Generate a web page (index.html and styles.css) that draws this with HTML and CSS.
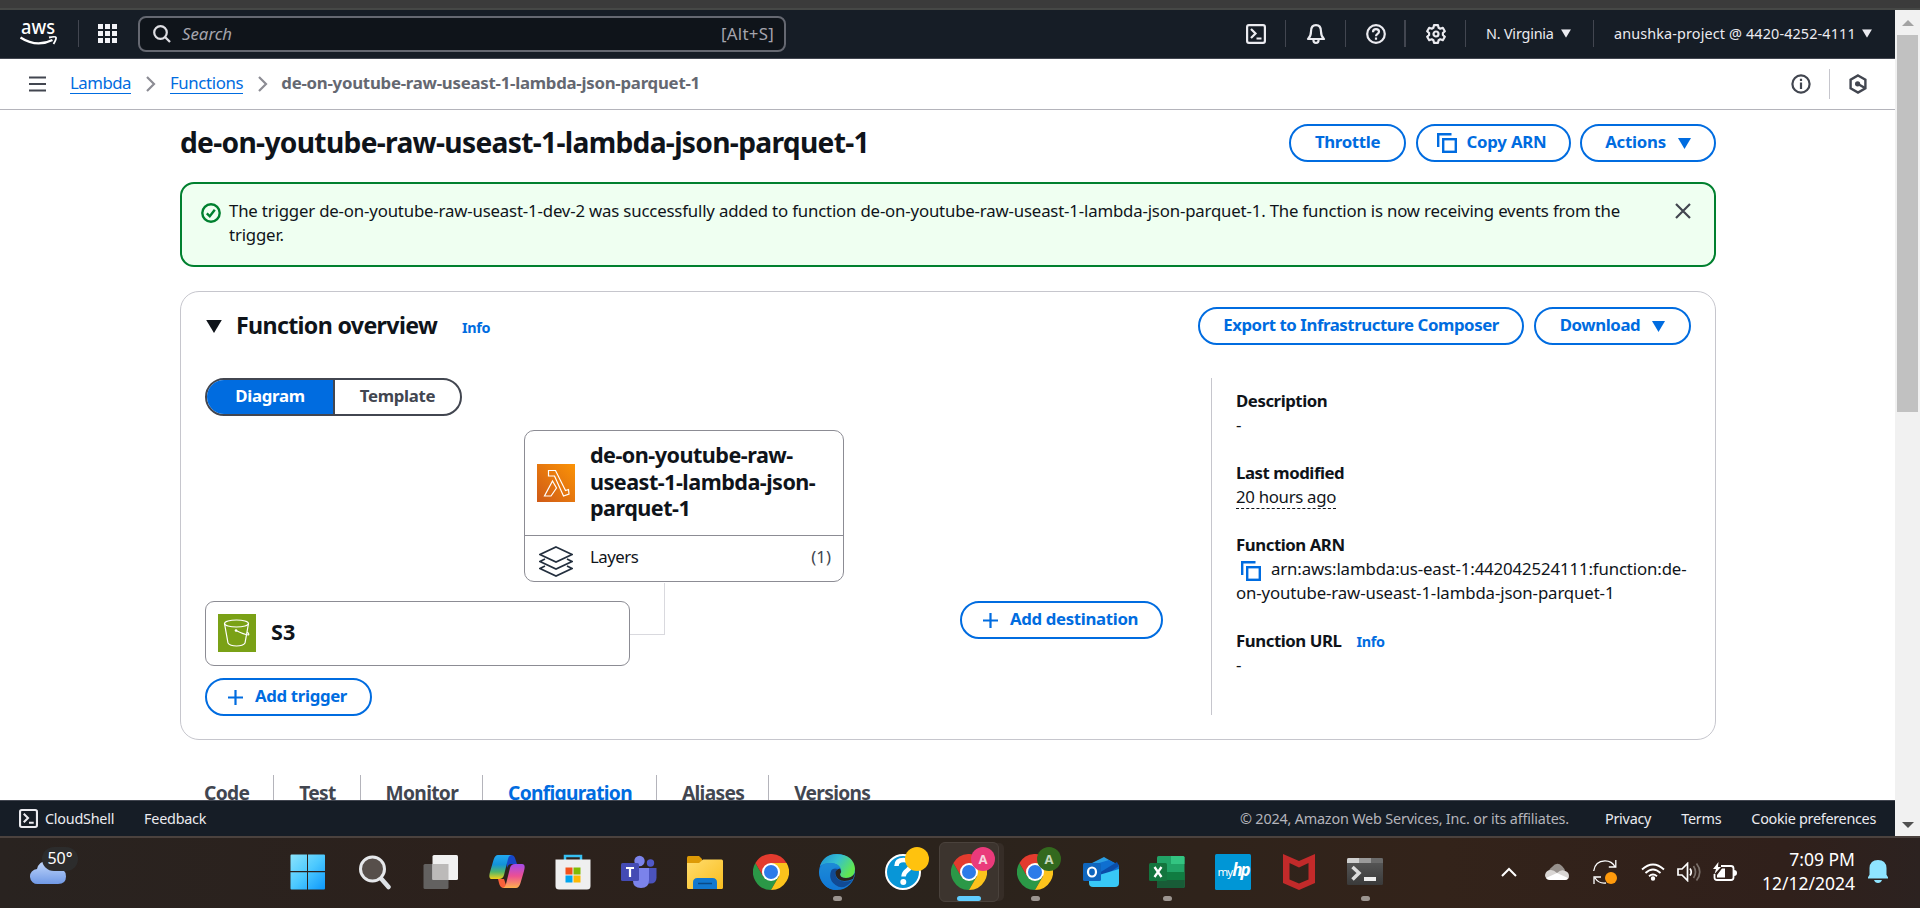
FILE: index.html
```
<!DOCTYPE html>
<html lang="en">
<head>
<meta charset="utf-8">
<title>de-on-youtube-raw-useast-1-lambda-json-parquet-1 | Functions | Lambda</title>
<link rel="stylesheet" href="styles.css">
</head>
<body>
<svg class="defs" width="0" height="0">
  <defs>
    <linearGradient id="gWin" x1="0" y1="0" x2="1" y2="1"><stop offset="0" stop-color="#8be3fb"/><stop offset=".5" stop-color="#4cc9ff"/><stop offset="1" stop-color="#0d98fb"/></linearGradient>
    <linearGradient id="gLam" x1="0" y1="1" x2="1" y2="0"><stop offset="0" stop-color="#cf5a17"/><stop offset="1" stop-color="#fb9306"/></linearGradient>
    <linearGradient id="gCloud" x1="0" y1="0" x2="0" y2="1"><stop offset="0" stop-color="#c3d8fb"/><stop offset="1" stop-color="#7099e6"/></linearGradient>
    <linearGradient id="gCopA" x1="0" y1="0" x2="0" y2="1"><stop offset="0" stop-color="#22a8f0"/><stop offset=".4" stop-color="#1392d8"/><stop offset=".7" stop-color="#4fb56c"/><stop offset="1" stop-color="#f4d018"/></linearGradient>
    <linearGradient id="gCopB" x1="0" y1="0" x2="0" y2="1"><stop offset="0" stop-color="#a34bea"/><stop offset=".5" stop-color="#ec4f93"/><stop offset="1" stop-color="#fdb04d"/></linearGradient>
    <linearGradient id="gFold" x1="0" y1="0" x2="1" y2="1"><stop offset="0" stop-color="#ffdd6e"/><stop offset="1" stop-color="#f9bd1e"/></linearGradient>
    <linearGradient id="gEdge" x1="0" y1="0" x2="1" y2=".5"><stop offset="0" stop-color="#1c8fd6"/><stop offset=".5" stop-color="#35bfd0"/><stop offset="1" stop-color="#62e84e"/></linearGradient>
    <linearGradient id="gEdge2" x1="0" y1="0" x2="0" y2="1"><stop offset="0" stop-color="#1d8bd6"/><stop offset="1" stop-color="#1077d6"/></linearGradient>
    <linearGradient id="gTerm" x1="0" y1="0" x2="0" y2="1"><stop offset="0" stop-color="#5a5a5a"/><stop offset="1" stop-color="#3a3a3a"/></linearGradient>
    <symbol id="copy" viewBox="0 0 20 20"><path d="M1.200 14V1.200H14.500" fill="none" stroke="currentColor" stroke-width="2.400"/><rect x="6.200" y="6.200" width="12.600" height="12.600" fill="none" stroke="currentColor" stroke-width="2.400"/></symbol>
    <symbol id="caret" viewBox="0 0 12 10"><path d="M0 0h12L6 10z" fill="currentColor"/></symbol>
    <symbol id="plus" viewBox="0 0 15 15"><path d="M7.500 0v15M0 7.500h15" stroke="currentColor" stroke-width="2.200"/></symbol>
    <symbol id="shell" viewBox="0 0 20 20"><rect x="1.100" y="1.100" width="17.800" height="17.800" rx="1.800" fill="none" stroke="currentColor" stroke-width="2.200"/><path d="M5 5l4.500 4.500L5 14M10.500 14.500h5" fill="none" stroke="currentColor" stroke-width="2.200"/></symbol>
    <symbol id="chev" viewBox="0 0 10 16"><path d="M1 1l7 7-7 7" fill="none" stroke="#8c8c94" stroke-width="2.200"/></symbol>
    <symbol id="chrome" viewBox="0 0 36 36">
      <path d="M2.400 9L10.200 22.500L18 27L25.800 22.500L18 36A18 18 0 0 1 2.400 9z" fill="#2b9847"/>
      <path d="M25.800 22.500L18 36A18 18 0 0 0 33.600 9H18z" fill="#fcc31c"/>
      <path d="M2.400 9A18 18 0 0 1 33.600 9H18L10.200 22.500z" fill="#e33b2e"/>
      <circle cx="18" cy="18" r="9" fill="#fff"/><circle cx="18" cy="18" r="7" fill="#2d7be9"/>
    </symbol>
  </defs>
</svg>

<div class="chrome-edge"></div>
<div class="viewport">
  <div class="console">
    <header class="topnav">
      <svg class="aws" viewBox="0 0 38 26"><text x="1" y="13" textLength="34" lengthAdjust="spacingAndGlyphs" class="aws-word">aws</text><path d="M.500 16.500q16 10.500 32 2.500" fill="none" stroke="#fff" stroke-width="2.300"/><path d="M29 16.500q6.500-1.500 7 0t-2.500 6.500" fill="none" stroke="#fff" stroke-width="1.800"/></svg>
      <i class="vr vr-logo"></i>
      <svg class="apps" viewBox="0 0 19 19" fill="#f3f3f7"><path d="M0 0h5v5H0zM7 0h5v5H7zM14 0h5v5h-5zM0 7h5v5H0zM7 7h5v5H7zM14 7h5v5h-5zM0 14h5v5H0zM7 14h5v5H7zM14 14h5v5h-5z"/></svg>
      <div class="search">
        <svg class="mag" viewBox="0 0 18 18"><circle cx="7.500" cy="7.500" r="6.300" fill="none" stroke="#dedee3" stroke-width="2.200"/><path d="M12 12l5 5" stroke="#dedee3" stroke-width="2.300"/></svg>
        <span class="ph">Search</span><span class="keys">[Alt+S]</span>
      </div>
      <div class="tools">
        <svg class="ti" viewBox="0 0 20 20"><use href="#shell"/></svg>
        <i class="vr"></i>
        <svg class="ti" viewBox="0 0 20 20" fill="none" stroke="currentColor" stroke-width="2.200"><path d="M2 15c2.300-2 3-4 3-7.500C5 3.500 7 1.200 10 1.200s5 2.300 5 6.300c0 3.500.7 5.500 3 7.500zM7.500 15.500v1q0 2.300 2.500 2.300t2.500-2.300v-1" stroke-linejoin="round"/></svg>
        <i class="vr"></i>
        <svg class="ti" viewBox="0 0 20 20" fill="none" stroke="currentColor" stroke-width="2.200"><circle cx="10" cy="10" r="8.800"/><path d="M7 8.200C7 6.300 8.200 5.200 10 5.200s3 1 3 2.600c0 2.200-3 2-3 4.400M10 13.600v2.200"/></svg>
        <i class="vr vr-thick"></i>
        <svg class="ti" viewBox="0 0 20 20" fill="none" stroke="currentColor" stroke-width="2.200"><path d="M8 1.200h4l.6 2.500 1.700 1 2.500-.9 2 3.400-1.900 1.800v2l1.900 1.800-2 3.400-2.500-.9-1.700 1-.6 2.500H8l-.6-2.500-1.700-1-2.500.9-2-3.400L3.100 11V9L1.200 7.200l2-3.400 2.500.9 1.700-1z" stroke-linejoin="round"/><circle cx="10" cy="10" r="2.500"/></svg>
        <i class="vr"></i>
        <span class="region t13">N. Virginia</span><svg class="nc" viewBox="0 0 12 10"><use href="#caret"/></svg>
        <i class="vr vr-acct"></i>
        <span class="acct t13">anushka-project @ 4420-4252-4111</span><svg class="nc" viewBox="0 0 12 10"><use href="#caret"/></svg>
      </div>
    </header>

    <nav class="crumbs">
      <svg class="burger" viewBox="0 0 17 16"><path d="M0 1.500h17M0 8h17M0 14.500h17" stroke="#424650" stroke-width="2"/></svg>
      <a class="lk l1">Lambda</a><svg class="cv"><use href="#chev"/></svg>
      <a class="lk l2">Functions</a><svg class="cv"><use href="#chev"/></svg>
      <span class="here">de-on-youtube-raw-useast-1-lambda-json-parquet-1</span>
      <svg class="ci info-i" viewBox="0 0 20 20" fill="none" stroke="#424650" stroke-width="2.200"><circle cx="10" cy="10" r="8.600"/><path d="M10 4.800v2.200M10 8.500v6.500"/></svg>
      <i class="cdiv"></i>
      <svg class="ci" viewBox="0 0 20 20" fill="none" stroke="#424650" stroke-width="2.400"><path d="M10 1.500l7.400 4.200v8.600L10 18.500l-7.400-4.200V5.700z"/><circle cx="9.600" cy="9.800" r="2.600" fill="#424650" stroke="none"/><path d="M10 10l7 4"/></svg>
    </nav>

    <main class="page">
      <div class="head">
        <h1>de-on-youtube-raw-useast-1-lambda-json-parquet-1</h1>
        <button class="btn b-throttle">Throttle</button>
        <button class="btn b-copy"><svg class="cp"><use href="#copy"/></svg>Copy ARN</button>
        <button class="btn b-actions">Actions<svg class="ca"><use href="#caret"/></svg></button>
      </div>

      <section class="flash">
        <svg class="ok" viewBox="0 0 20 20" fill="none" stroke="#00802f" stroke-width="2.400"><circle cx="10" cy="10" r="8.700"/><path d="M5.800 10.300l3 3 5-6.500"/></svg>
        <p>The trigger de-on-youtube-raw-useast-1-dev-2 was successfully added to function de-on-youtube-raw-useast-1-lambda-json-parquet-1. The function is now receiving events from the<br>trigger.</p>
        <svg class="x" viewBox="0 0 16 16"><path d="M1 1l14 14M15 1L1 15" stroke="#424650" stroke-width="2.200"/></svg>
      </section>

      <section class="overview">
        <div class="ov-head">
          <svg class="fold"><use href="#caret"/></svg>
          <h2>Function overview</h2><a class="info">Info</a>
          <button class="btn b-export">Export to Infrastructure Composer</button>
          <button class="btn b-down">Download<svg class="ca"><use href="#caret"/></svg></button>
        </div>
        <div class="ov-body">
          <div class="diagram">
            <div class="seg"><span class="on">Diagram</span><span class="off">Template</span></div>
            <div class="fn">
              <div class="fn-top">
                <svg class="svc" viewBox="0 0 38 38"><rect width="38" height="38" fill="url(#gLam)"/><path d="M11.500 6.500h7l10 20 3-1 .5 4.500-5.500 2L17.500 12h-6zM15.500 17l4 7-5.500 8H7.500z" fill="none" stroke="#fff" stroke-width="1.200"/></svg>
                <span class="fn-name">de-on-youtube-raw-<br>useast-1-lambda-json-<br>parquet-1</span>
              </div>
              <div class="fn-layers">
                <svg class="lay" viewBox="0 0 34 31" fill="none" stroke="#232f3e" stroke-width="1.600"><path d="M17 1l16 7.500L17 16 1 8.500zM6 13l-5 2.500L17 23l16-7.500-5-2.500M6 20l-5 2.500L17 30l16-7.500-5-2.500"/></svg>
                <span class="lt">Layers</span><span class="ln">(1)</span>
              </div>
            </div>
            <div class="row">
              <div class="s3">
                <svg class="svc" viewBox="0 0 38 38"><rect width="38" height="38" fill="#7aa116"/><g fill="none" stroke="#fff" stroke-width="1.200"><ellipse cx="18.500" cy="9.500" rx="12" ry="3.500"/><path d="M6.500 9.500L10 29q2 3 8.500 3t8.500-3l3.500-19.500"/><path d="M18 16.500q8 4 12.500 4.500 1-.5-1.200-3"/></g><circle cx="18" cy="16.500" r="1.300" fill="#fff"/></svg>
                <span>S3</span>
              </div>
              <div class="wire"></div>
              <button class="btn b-dest"><svg class="pl"><use href="#plus"/></svg>Add destination</button>
            </div>
            <button class="btn b-trig"><svg class="pl"><use href="#plus"/></svg>Add trigger</button>
          </div>
          <dl class="details">
            <dt>Description</dt><dd>-</dd>
            <dt>Last modified</dt><dd><span class="ago">20 hours ago</span></dd>
            <dt>Function ARN</dt><dd class="arn"><svg class="cp"><use href="#copy"/></svg>arn:aws:lambda:us-east-1:442042524111:function:de-<br>on-youtube-raw-useast-1-lambda-json-parquet-1</dd>
            <dt>Function URL<a class="info">Info</a></dt><dd>-</dd>
          </dl>
        </div>
      </section>

      <nav class="tabs"><span>Code</span><span>Test</span><span>Monitor</span><span class="cur">Configuration</span><span>Aliases</span><span>Versions</span></nav>
    </main>

    <footer class="foot">
      <svg class="fs" viewBox="0 0 20 20"><use href="#shell"/></svg>
      <span class="f1">CloudShell</span><span class="f2">Feedback</span>
      <span class="f3">© 2024, Amazon Web Services, Inc. or its affiliates.</span>
      <span class="f4">Privacy</span><span class="f5">Terms</span><span class="f6">Cookie preferences</span>
    </footer>
  </div>
  <div class="scroll">
    <svg class="sa up" viewBox="0 0 12 6"><path d="M0 6h12L6 0z" fill="#a3a3a3"/></svg>
    <i class="thumb"></i>
    <svg class="sa dn" viewBox="0 0 12 6"><path d="M0 0h12L6 6z" fill="#505050"/></svg>
  </div>
</div>

<div class="taskbar">
  <div class="weather"><svg viewBox="0 0 36 24"><path d="M8 23a7.500 7.500 0 0 1-1-15Q9 0 17 0q7 0 9 7 10 0 10 8.500Q36 23 28 23z" fill="url(#gCloud)"/></svg><span>50°</span></div>
  <div class="apps-row">
    <div class="app"><svg viewBox="0 0 36 36"><path d="M.5 1.500q0-1 1-1H17V17H.500zM18 .5h16q1 0 1 1V17H18zM.500 18.200H17V35.500H1.500q-1 0-1-1zM18 18.200h17v16.300q0 1-1 1H18z" fill="url(#gWin)"/></svg></div>
    <div class="app"><svg viewBox="0 0 36 36"><path d="M24.500 25l7 8" stroke="#dde1e6" stroke-width="4.500" stroke-linecap="round"/><circle cx="15.500" cy="15" r="12" fill="#574f4b" stroke="#e6e8eb" stroke-width="3"/></svg></div>
    <div class="app"><svg viewBox="0 0 36 36"><rect x=".5" y="10" width="25" height="25" rx="1.500" fill="#636160"/><rect x="9.500" y="1" width="25.500" height="25" rx="1.500" fill="#f1f1f1"/><rect x="9.500" y="10" width="16" height="16" fill="#bcbab9"/></svg></div>
    <div class="app"><svg viewBox="0 0 36 36"><path d="M17 1h5q3 0 4 3l2 6h-6q-3 0-4 4z" fill="#1647c8"/><path d="M9 25h6l3 9h-3q-4 0-5-5z" fill="#f8603a"/><path d="M9 1h14q-3 0-4 4l-4 16q-1 4-5 4H3q-4 0-2-7L4.500 6Q6 1 9 1z" fill="url(#gCopA)"/><path d="M27 34H13q3 0 4-4l4-16q1-4 5-4h7q4 0 2 7l-3.500 12Q30 34 27 34z" fill="url(#gCopB)"/></svg></div>
    <div class="app"><svg viewBox="0 0 36 36"><path d="M10 8V2h16v6" fill="none" stroke="#36c0f2" stroke-width="2.500"/><path d="M.5 5.500h35V32q0 3.500-3.500 3.500H4Q.5 35.500.5 32z" fill="#efefef"/><path d="M10.500 13.500h7v7h-7z" fill="#f2511b"/><path d="M18.500 13.500h7v7h-7z" fill="#80bb03"/><path d="M10.500 21.500h7v7h-7z" fill="#00a5ee"/><path d="M18.500 21.500h7v7h-7z" fill="#fdb902"/></svg></div>
    <div class="app"><svg viewBox="0 0 36 36"><circle cx="18.500" cy="7" r="5.200" fill="#7b83eb"/><circle cx="29.500" cy="9" r="3.700" fill="#5059c9"/><path d="M25 14h10.500v9.500q0 6-6 6H25z" fill="#4b53bc"/><path d="M12 14h16v12q0 8-8 8t-8-7z" fill="#7b83eb"/><rect y="9" width="18" height="18" rx="1.500" fill="#444bb4"/><path d="M5 14h8M9 14v9" stroke="#fff" stroke-width="2.200"/></svg></div>
    <div class="app"><svg viewBox="0 0 36 36"><path d="M0 3.500Q0 2 1.500 2H12l3 3v6H0z" fill="#dd9a06"/><path d="M0 9h12l4-3.500h18.500Q36 5.500 36 7v26.500q0 1.500-1.500 1.500h-33Q0 35 0 33.500z" fill="url(#gFold)"/><path d="M6 35v-6.500q0-4.500 4.500-4.500h15q4.500 0 4.500 4.500V35z" fill="#1278cf"/><path d="M11 29.500h14" stroke="#0a4a86" stroke-width="1.500"/></svg></div>
    <div class="app"><svg viewBox="0 0 36 36"><use href="#chrome"/></svg></div>
    <div class="app"><svg viewBox="0 0 36 36"><circle cx="18" cy="18" r="18" fill="#1579d4"/><path d="M1 12Q5 0 18 0q17 1 18 15 0 9-9 9-6 0-6-4 2-2 1-5-3-6-10-6Q5 9 1 12z" fill="url(#gEdge)"/><path d="M0 18Q1 9 11 9q8 0 10.500 5Q14 12 12 18q-3 8 6 18Q3 36 0 18z" fill="url(#gEdge2)"/><path d="M12.500 16q-4 9 4 15 8 6 16 -3.500l1-1.500q-4 1.500-8 1.500-9-1-9-7.500 0-3 2-5-4-1-6 1z" fill="#114a94"/><path d="M21 14.500q-5 1-4.500 5.500 1 6.500 9 7 4 0 8.500-2L36 19q-3 5-9 5-6 0-6-4 2-2 0-5.500z" fill="#2c241e"/></svg><i class="dot"></i></div>
    <div class="app"><svg viewBox="0 0 36 36"><circle cx="18" cy="18" r="17" fill="#0896d7" stroke="#fff" stroke-width="2"/><path d="M11.500 12q0-6 7-6t7 5.500c0 5-7 4.500-7 11" fill="none" stroke="#fff" stroke-width="4.500"/><circle cx="18.300" cy="28" r="3" fill="#fff"/></svg><b class="bdg yellow"></b></div>
    <div class="app active"><svg viewBox="0 0 36 36"><use href="#chrome"/></svg><b class="bdg pink">A</b><i class="bar"></i></div>
    <div class="app"><svg viewBox="0 0 36 36"><use href="#chrome"/></svg><b class="bdg green">A</b><i class="dot"></i></div>
    <div class="app"><svg viewBox="0 0 36 36"><path d="M7 10L21 3l12 7-14 9z" fill="#2a9de2"/><path d="M6 12L26 6l10 5v10L14 26z" fill="#0f6fd0"/><path d="M16 19l18-11 2 4-16 11z" fill="#0b4da8"/><path d="M6 24L36 15v14q0 4-4 4H10q-4 0-4-4z" fill="#38c8f6"/><rect y="9" width="18" height="18" rx="1.500" fill="#0f66be"/><ellipse cx="9" cy="18" rx="4" ry="4.500" fill="none" stroke="#fff" stroke-width="2.200"/></svg></div>
    <div class="app"><svg viewBox="0 0 36 36"><rect x="8" y="2" width="27.500" height="32" rx="1.500" fill="#21a366"/><path d="M22 2h12q1.500 0 1.500 1.500V10H22z" fill="#33c481"/><path d="M8 18h14v8H8zM22 18h13.500v8H22z" fill="#107c41"/><path d="M8 26h27.500v6.500q0 1.500-1.500 1.500H9.500Q8 34 8 32.500z" fill="#185c37"/><rect y="9" width="18" height="18" rx="1.500" fill="#13753e"/><path d="M5.500 13l7 10M12.500 13l-7 10" stroke="#fff" stroke-width="2.300"/></svg><i class="dot"></i></div>
    <div class="app"><svg viewBox="0 0 36 36"><rect width="36" height="36" rx="1.500" fill="#0096d6"/><text x="2.500" y="21.500" class="my">my<tspan class="hp">hp</tspan></text></svg></div>
    <div class="app"><svg viewBox="0 0 36 36"><path d="M2 0l16 7 16-7v29l-16 7-16-7zM8.500 9v16.500l9.500 4 9.500-4V9L18 13.500z" fill="#c22a2a" fill-rule="evenodd"/></svg></div>
    <div class="app"><svg viewBox="0 0 36 36"><rect y="4" width="36" height="27" rx="1.500" fill="url(#gTerm)"/><path d="M0 9V5.500Q0 4 1.500 4H12v5z" fill="#cfcfcf"/><path d="M12 4h12v5H12z" fill="#9a9a9a"/><path d="M24 4h10.500Q36 4 36 5.500V9H24z" fill="#6a6a6a"/><path d="M5.500 13l6.500 6-6.500 6.500" fill="none" stroke="#ddd" stroke-width="3.500"/><path d="M17 25h12" stroke="#eee" stroke-width="4"/></svg><i class="dot"></i></div>
  </div>
  <div class="tray">
    <svg class="up-chev" viewBox="0 0 16 10"><path d="M1 9l7-7 7 7" fill="none" stroke="#fff" stroke-width="2"/></svg>
    <svg class="od" viewBox="0 0 24 18"><path d="M3 9q2-4 4-5 5-6 10-1 3 3 3 5 3 1 3 5H3z" fill="#96908c"/><path d="M12 10q4-4 8-2 4 1 4 5 0 4-4 4H5q-5-1-5-5Q1 7 6 7q3 0 6 3z" fill="#d9d6d4"/><path d="M1 15l11-5 11 5q-1 2-3 2H5q-3 0-4-2z" fill="#fff"/></svg>
    <svg class="sync" viewBox="0 0 24 24"><path d="M.7 11Q2 1 12 .8q7 0 10 6M22.800 0v7h-7M1 24v-7h7M2 18q4 6 11 5" fill="none" stroke="#fff" stroke-width="1.300"/><circle cx="18" cy="18" r="6" fill="#ff9a0c"/></svg>
    <svg class="wifi" viewBox="0 0 24 18" fill="none" stroke="#fff" stroke-width="1.800"><path d="M1 6.500q11-10 22 0M4.500 10q7.500-7 15 0M8 13.300q4-3.500 8 0"/><circle cx="12" cy="15.500" r="1.300" fill="#fff"/></svg>
    <svg class="vol" viewBox="0 0 24 20" fill="none" stroke="#fff" stroke-width="1.700"><path d="M1 7h4l5.500-5.500v17L5 13H1zM13 6.500q2.500 3.500 0 7"/><path d="M16.500 4q4 6 0 12M19.500 1.500q6.500 8.500 0 17" stroke="#7a706a"/></svg>
    <svg class="bat" viewBox="0 0 24 20"><path d="M8 4h10q2.500 0 2.500 2.500v9q0 2.500-2.500 2.500H4q-2.500 0-2.500-2.500V12" fill="none" stroke="#fff" stroke-width="1.800"/><path d="M21 8q3 0 3 3t-3 3zM4 15.500V13l5-6.500h3v9zM5.500 0L0 7h3L1.500 12 8 5H5z" fill="#fff"/></svg>
    <div class="clock"><span>7:09 PM</span><span>12/12/2024</span></div>
    <svg class="bell" viewBox="0 0 20 24"><path d="M0 18.500v-1.200l1.500-2.500V8Q2 0 10 0t8.500 8v6.800l1.500 2.500v1.200zM6 20h8q-1 3-4 3t-4-3z" fill="#8fe4ff"/></svg>
  </div>
</div>
</body>
</html>
```
FILE: styles.css
```
* { box-sizing: border-box; }
body { margin: 0; width: 1920px; height: 908px; overflow: hidden; font-family: "Noto Sans", "Open Sans", sans-serif; font-size: 16.8px; line-height: 24px; color: #0f141a; background: #fff; display: flex; flex-direction: column; }
svg { display: block; flex: none; }
span, a, h1, h2 { white-space: nowrap; }
.defs { position: absolute; }
button { font-family: inherit; background: #fff; margin: 0; padding: 0; }

.chrome-edge { height: 10px; flex: none; background: #3b3b3b; border-bottom: 2px solid #464846; }
.viewport { display: flex; height: 826px; flex: none; }
.console { width: 1895px; display: flex; flex-direction: column; overflow: hidden; }

.topnav { height: 49px; flex: none; background: #161d26; border-bottom: 1px solid #424650; display: flex; align-items: center; padding: 0 23px 1px 20px; color: #ebebf0; }
.aws { width: 38px; height: 26px; margin-top: 1px; overflow: visible; }
.aws-word { font-size: 19px; font-weight: 500; fill: #fff; }
.vr { width: 1px; height: 27px; background: #424650; flex: none; }
.vr-logo { margin-left: 20px; }
.apps { width: 19px; height: 19px; margin-left: 19px; }
.search { width: 648px; height: 36px; margin-left: 21px; border: 2px solid #656871; border-radius: 8px; background: #0f141a; display: flex; align-items: center; padding: 0 10px 0 13px; }
.mag { width: 18px; height: 18px; }
.ph { margin-left: 11px; font-style: italic; color: #a4a4ad; }
.keys { margin-left: auto; color: #a4a4ad; letter-spacing: .3px; }
.tools { margin-left: auto; display: flex; align-items: center; }
.ti { width: 20px; height: 20px; }
.tools .vr { margin: 0 20px 0 19px; }
.tools .vr-thick { width: 2px; margin: 0 20px 0 18px; }
.tools .vr-acct { margin: 0 20px 0 22px; }
.t13 { font-size: 14.4px; }
.region { width: 67px; letter-spacing: -.2px; }
.acct { width: 240px; letter-spacing: .13px; }
.nc { width: 10px; height: 9px; margin-left: 8px; }

.crumbs { height: 51px; flex: none; border-bottom: 1px solid #b4b4bb; display: flex; align-items: center; padding: 0 27px 1px 29px; }
.burger { width: 17px; height: 16px; margin-right: 24px; }
.lk { color: #006ce0; border-bottom: 1px solid #006ce0; height: 21px; line-height: 19px; }
.l1 { letter-spacing: -.5px; }
.l2 { letter-spacing: -.35px; }
.cv { width: 10px; height: 16px; margin: 0 14px 0 15px; }
.cv + .here { margin-left: -1px; }
.here { font-weight: 700; color: #656871; letter-spacing: -.24px; padding-bottom: 1px; }
.ci { width: 20px; height: 20px; }
.info-i { margin-left: auto; }
.cdiv { width: 1px; height: 30px; background: #c6c6cd; margin: 0 18px; }

.page { width: 1536px; margin-left: 180px; height: 690px; flex: none; overflow: hidden; }
.head { display: flex; margin-top: 14px; height: 38px; align-items: center; }
h1 { margin: 0 auto 0 0; font-size: 28.2px; line-height: 36px; font-weight: 700; letter-spacing: -.7px; padding-bottom: 2px; }
.btn { height: 38px; border: 2px solid #006ce0; border-radius: 24px; color: #006ce0; font-weight: 700; font-size: 16.8px; line-height: 24px; display: flex; align-items: center; justify-content: center; white-space: nowrap; flex: none; letter-spacing: -.33px; padding-bottom: 2px; }
.btn svg { position: relative; top: 1px; }
.b-throttle { width: 117px; }
.b-copy { width: 155px; margin-left: 10px; letter-spacing: -.2px; padding-right: 3px; }
.b-actions { width: 136px; margin-left: 9px; letter-spacing: -.25px; }
.cp { width: 20px; height: 20px; margin-right: 9px; color: #006ce0; }
.ca { width: 13px; height: 11px; margin-left: 12px; }
.pl { width: 15px; height: 15px; margin-right: 12px; }

.flash { margin-top: 20px; height: 85px; border: 2px solid #00802f; border-radius: 14px; background: #effff1; display: flex; align-items: flex-start; padding: 15px 23px 0 19px; }
.ok { width: 20px; height: 20px; margin: 4px 8px 0 0; }
.flash p { margin: 0; white-space: nowrap; letter-spacing: -.172px; }
.x { width: 16px; height: 16px; margin: 4px 0 0 auto; }

.overview { margin-top: 24px; height: 449px; border: 1px solid #c6c6cd; border-radius: 19px; padding: 15px 24px 0; }
.ov-head { display: flex; align-items: center; height: 38px; }
.fold { width: 16px; height: 13px; margin: 0 14px 0 1px; }
h2 { margin: 0; font-size: 23.2px; line-height: 30px; font-weight: 700; letter-spacing: -.66px; padding-bottom: 3px; }
.info { font-size: 14.4px; font-weight: 700; color: #006ce0; letter-spacing: -.35px; }
.ov-head .info { margin: 4px auto 0 25px; }
.b-export { width: 326px; letter-spacing: -.43px; }
.b-down { width: 157px; margin-left: 10px; letter-spacing: -.42px; }
.ov-body { display: flex; margin-top: 33px; height: 337px; }
.diagram { width: 1007px; border-right: 1px solid #c6c6cd; }
.seg { display: flex; width: 257px; height: 38px; border: 2px solid #424650; border-radius: 20px; overflow: hidden; font-weight: 700; letter-spacing: -.3px; }
.seg span { display: flex; align-items: center; justify-content: center; padding-bottom: 2px; }
.on { width: 128px; background: #006ce0; color: #fff; border-right: 2px solid #424650; }
.off { flex: 1; color: #424650; }
.fn { width: 320px; height: 152px; margin: 14px 0 0 319px; border: 1px solid #8c8c94; border-radius: 10px; }
.fn-top { height: 105px; display: flex; align-items: center; padding-left: 12px; border-bottom: 1px solid #8c8c94; }
.svc { width: 38px; height: 38px; }
.fn-name { margin-left: 15px; font-size: 21.6px; line-height: 26.400px; font-weight: 700; letter-spacing: -.53px; padding-bottom: 2px; }
.fn-layers { display: flex; height: 45px; align-items: center; padding: 0 12px 3px 14px; }
.lay { width: 34px; height: 31px; margin-top: 9px; }
.lt { margin-left: 17px; letter-spacing: -.5px; }
.ln { margin-left: auto; color: #424650; }
.row { display: flex; align-items: flex-start; margin-top: 19px; height: 65px; }
.s3 { width: 425px; height: 65px; border: 1px solid #8c8c94; border-radius: 9px; display: flex; align-items: center; padding: 0 0 1px 12px; font-size: 21.600px; font-weight: 700; }
.s3 span { margin-left: 15px; padding-bottom: 2px; }
.wire { width: 35px; height: 52px; margin-top: -18px; border: solid #d9d9de; border-width: 0 1px 1px 0; }
.b-dest { width: 203px; margin-left: 295px; padding-right: 2px; }
.b-trig { width: 167px; margin-top: 12px; padding-right: 2px; }
.details { margin: 0; padding: 11px 0 0 24px; }
dt { font-weight: 700; height: 24px; white-space: nowrap; letter-spacing: -.45px; }
dd { margin: 0 0 24px; height: 24px; }
.ago { display: inline-block; height: 24px; border-bottom: 1px dashed #0f141a; letter-spacing: -.3px; }
dd.arn { height: 48px; white-space: nowrap; letter-spacing: -.12px; }
.arn .cp { display: inline-block; vertical-align: -6px; margin: -4px 10px 0 5px; height: 20px; }
dt .info { margin-left: 15px; }

.tabs { display: flex; margin: 35px 0 0 24px; font-size: 19.200px; font-weight: 700; color: #424650; height: 40px; line-height: 35px; letter-spacing: -.68px; }
.tabs span + span { margin-left: 24px; padding-left: 25px; border-left: 1px solid #b4b4bb; }
.tabs .cur { color: #006ce0; }

.foot { height: 37px; flex: none; background: #161d26; border-top: 1px solid #424650; display: flex; align-items: center; color: #ebebf0; font-size: 14.4px; padding: 0 19px 1px; letter-spacing: -.25px; }
.fs { width: 19px; height: 19px; margin-right: 7px; }
.f2 { margin-left: 30px; }
.f3 { margin-left: auto; color: #b4b4bb; letter-spacing: -.19px; }
.f4 { margin-left: 36px; }
.f5, .f6 { margin-left: 30px; }
.f6 { letter-spacing: -.3px; }

.scroll { width: 25px; background: #f1f1f1; display: flex; flex-direction: column; align-items: center; }
.sa { width: 12px; height: 6px; }
.up { margin: 10px 0 9px; }
.thumb { width: 21px; height: 377px; background: #c1c1c1; }
.dn { margin-top: auto; margin-bottom: 8px; }

.taskbar { height: 72px; flex: none; border-top: 2px solid #4b423e; background: linear-gradient(90deg, #292320 0%, #2c211c 25%, #2b231c 50%, #33231a 75%, #30201b 93%, #2c2220 100%); display: flex; position: relative; }
.weather { width: 274px; padding: 23px 0 0 30px; position: relative; }
.weather svg { width: 36px; height: 24px; }
.weather span { position: absolute; left: 42px; top: 9px; width: 36px; height: 24px; border-radius: 12px; background: #2c2c2c; color: #fff; font-size: 16px; text-align: center; line-height: 23px; }
.apps-row { display: flex; gap: 6px; margin: 4px 0 0 3px; }
.app { width: 60px; height: 60px; display: flex; align-items: center; justify-content: center; position: relative; border-radius: 6px; }
.app:first-child { width: 61px; margin-right: 1px; }
.app svg { width: 36px; height: 36px; }
.active { background: #3c342e; border: 1px solid #4a423c; box-shadow: 6px 0 0 -1px #362d27; }
.dot, .bar { position: absolute; bottom: 1px; left: 26px; width: 9px; height: 5px; border-radius: 3px; background: #9c9590; }
.bar { left: 17px; bottom: 0; width: 24px; background: #60cdff; }
.bdg { position: absolute; left: 32px; top: 5px; width: 24px; height: 24px; border-radius: 50%; font-size: 13px; line-height: 24px; text-align: center; color: #f6d4df; }
.yellow { background: #ffc20e; }
.pink { background: #ea3a7b; top: 4px; left: 31px; }
.green { background: #33691e; color: #c5d8bc; }
.my { font-size: 11.500px; fill: #fff; letter-spacing: -1px; }
.hp { font-size: 17px; font-style: italic; font-weight: 700; letter-spacing: -2px; }
.tray { margin-left: auto; display: flex; align-items: center; padding: 0 32px 2px 0; color: #fff; }
.up-chev { width: 16px; height: 10px; margin-right: 28px; }
.od { width: 24px; height: 18px; margin-right: 24px; }
.sync { width: 24px; height: 24px; margin-right: 24px; }
.wifi { width: 24px; height: 18px; margin-right: 12px; }
.vol { width: 24px; height: 20px; margin-right: 12px; }
.bat { width: 24px; height: 20px; }
.clock { width: 118px; margin-right: -1px; text-align: right; font-size: 17.500px; line-height: 24px; padding-bottom: 2px; }
.clock span { display: block; }
.bell { width: 20px; height: 24px; margin-left: 14px; }
```
